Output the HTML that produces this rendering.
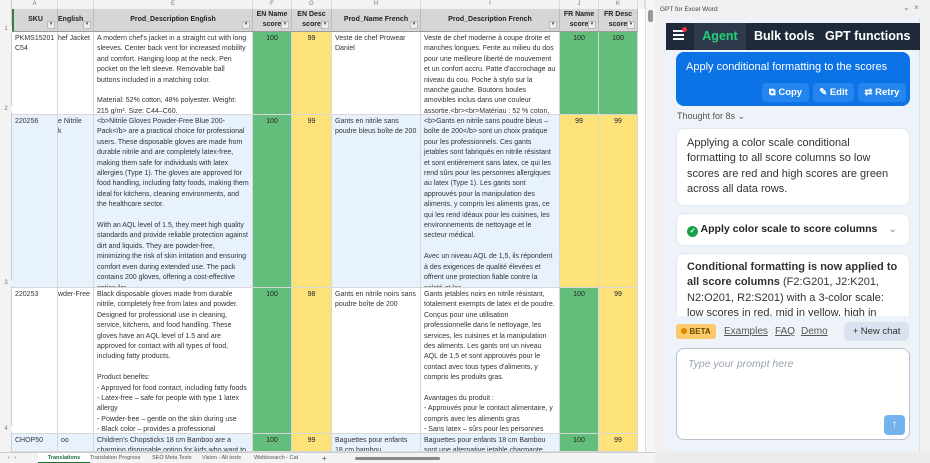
<!DOCTYPE html><html><head><meta charset="utf-8"><style>
*{box-sizing:border-box;margin:0;padding:0}
body{width:930px;height:463px;overflow:hidden;background:#f0f0f0;font-family:"Liberation Sans",sans-serif;position:relative}
.a{position:absolute;overflow:hidden}
.c{position:absolute;overflow:hidden;font-size:7px;line-height:10.4px;color:#333;padding:2px 3px;border-right:1px solid #d8d8d8;border-bottom:1px solid #d8d8d8}
.h{position:absolute;background:#d6d6d6;font-size:7px;font-weight:bold;color:#222;text-align:center;border-right:1px solid #bbb;border-bottom:1px solid #999;display:flex;align-items:center;justify-content:center;line-height:10px}
.h:after{content:"▾";position:absolute;right:2px;bottom:2px;width:6px;height:6px;background:#eee;border:1px solid #bbb;font-size:5px;line-height:5px;color:#555}
.l{position:absolute;top:0;height:9px;font-size:6px;color:#777;text-align:center;background:#f3f3f3;border-right:1px solid #ddd;line-height:9px}
.g{background:#63be7b;text-align:center;color:#222}
.y{background:#fde27a;text-align:center;color:#222}
.bl{background:#e7f2fd}
.w{background:#fff}
.rn{position:absolute;left:0;width:12px;font-size:6px;color:#777;background:#f3f3f3;text-align:center}
</style></head><body>
<div class="a" style="left:0;top:0;width:645px;height:452px;background:#fff">
<div class="l" style="left:12px;width:46px">A</div><div class="l" style="left:58px;width:36px"></div><div class="l" style="left:94px;width:159px">E</div><div class="l" style="left:253px;width:39px">F</div><div class="l" style="left:292px;width:40px">G</div><div class="l" style="left:332px;width:89px">H</div><div class="l" style="left:421px;width:139px">I</div><div class="l" style="left:560px;width:39px">J</div><div class="l" style="left:599px;width:39px">K</div><div class="l" style="left:638px;width:7px"></div>
<div class="rn" style="top:0;height:452px;border-right:1px solid #ccc"></div>
<div class="rn" style="top:26px">1</div><div class="rn" style="top:106px">2</div><div class="rn" style="top:280px">3</div><div class="rn" style="top:426px">4</div>
<div class="h" style="left:12px;top:9px;width:46px;height:23px;border-left:2px solid #3a7d44">SKU</div>
<div class="h" style="left:58px;top:9px;width:36px;height:23px;justify-content:flex-start">English</div>
<div class="h" style="left:94px;top:9px;width:159px;height:23px">Prod_Description English</div>
<div class="h" style="left:253px;top:9px;width:39px;height:23px">EN Name<br>score</div>
<div class="h" style="left:292px;top:9px;width:40px;height:23px">EN Desc<br>score</div>
<div class="h" style="left:332px;top:9px;width:89px;height:23px">Prod_Name French</div>
<div class="h" style="left:421px;top:9px;width:139px;height:23px">Prod_Description French</div>
<div class="h" style="left:560px;top:9px;width:39px;height:23px">FR Name<br>score</div>
<div class="h" style="left:599px;top:9px;width:39px;height:23px">FR Desc<br>score</div>
<div class="c w" style="left:12px;top:32px;width:46px;height:83px">PKMS15201 C54</div>
<div class="c w" style="left:58px;top:32px;width:36px;height:83px;white-space:nowrap;padding-left:0">hef Jacket</div>
<div class="c w" style="left:94px;top:32px;width:159px;height:83px">A modern chef's jacket in a straight cut with long sleeves. Center back vent for increased mobility and comfort. Hanging loop at the neck. Pen pocket on the left sleeve. Removable ball buttons included in a matching color.<br><br>Material: 52% cotton, 48% polyester. Weight: 215 g/m². Size: C44–C60.</div>
<div class="c g" style="left:253px;top:32px;width:39px;height:83px">100</div>
<div class="c y" style="left:292px;top:32px;width:40px;height:83px">99</div>
<div class="c w" style="left:332px;top:32px;width:89px;height:83px">Veste de chef Prowear Daniel</div>
<div class="c w" style="left:421px;top:32px;width:139px;height:83px">Veste de chef moderne à coupe droite et manches longues. Fente au milieu du dos pour une meilleure liberté de mouvement et un confort accru. Patte d'accrochage au niveau du cou. Poche à stylo sur la manche gauche. Boutons boules amovibles inclus dans une couleur assortie.&lt;br&gt;&lt;br&gt;Matériau : 52 % coton,</div>
<div class="c g" style="left:560px;top:32px;width:39px;height:83px">100</div>
<div class="c g" style="left:599px;top:32px;width:39px;height:83px">100</div>
<div class="c bl" style="left:12px;top:115px;width:46px;height:173px">220256</div>
<div class="c bl" style="left:58px;top:115px;width:36px;height:173px;padding-left:0;white-space:nowrap">e Nitrile<br>k</div>
<div class="c bl" style="left:94px;top:115px;width:159px;height:173px">&lt;b&gt;Nitrile Gloves Powder-Free Blue 200-Pack&lt;/b&gt; are a practical choice for professional users. These disposable gloves are made from durable nitrile and are completely latex-free, making them safe for individuals with latex allergies (Type 1). The gloves are approved for food handling, including fatty foods, making them ideal for kitchens, cleaning environments, and the healthcare sector.<br><br>With an AQL level of 1.5, they meet high quality standards and provide reliable protection against dirt and liquids. They are powder-free, minimizing the risk of skin irritation and ensuring comfort even during extended use. The pack contains 200 gloves, offering a cost-effective option for</div>
<div class="c g" style="left:253px;top:115px;width:39px;height:173px">100</div>
<div class="c y" style="left:292px;top:115px;width:40px;height:173px">99</div>
<div class="c bl" style="left:332px;top:115px;width:89px;height:173px">Gants en nitrile sans poudre bleus boîte de 200</div>
<div class="c bl" style="left:421px;top:115px;width:139px;height:173px">&lt;b&gt;Gants en nitrile sans poudre bleus – boîte de 200&lt;/b&gt; sont un choix pratique pour les professionnels. Ces gants jetables sont fabriqués en nitrile résistant et sont entièrement sans latex, ce qui les rend sûrs pour les personnes allergiques au latex (Type 1). Les gants sont approuvés pour la manipulation des aliments, y compris les aliments gras, ce qui les rend idéaux pour les cuisines, les environnements de nettoyage et le secteur médical.<br><br>Avec un niveau AQL de 1,5, ils répondent à des exigences de qualité élevées et offrent une protection fiable contre la saleté et les</div>
<div class="c y" style="left:560px;top:115px;width:39px;height:173px">99</div>
<div class="c y" style="left:599px;top:115px;width:39px;height:173px">99</div>
<div class="c w" style="left:12px;top:288px;width:46px;height:146px">220253</div>
<div class="c w" style="left:58px;top:288px;width:36px;height:146px;padding-left:0;white-space:nowrap">wder-Free</div>
<div class="c w" style="left:94px;top:288px;width:159px;height:146px">Black disposable gloves made from durable nitrile, completely free from latex and powder. Designed for professional use in cleaning, service, kitchens, and food handling. These gloves have an AQL level of 1.5 and are approved for contact with all types of food, including fatty products.<br><br>Product benefits:<br>- Approved for food contact, including fatty foods<br>- Latex-free – safe for people with type 1 latex allergy<br>- Powder-free – gentle on the skin during use<br>- Black color – provides a professional</div>
<div class="c g" style="left:253px;top:288px;width:39px;height:146px">100</div>
<div class="c y" style="left:292px;top:288px;width:40px;height:146px">98</div>
<div class="c w" style="left:332px;top:288px;width:89px;height:146px">Gants en nitrile noirs sans poudre boîte de 200</div>
<div class="c w" style="left:421px;top:288px;width:139px;height:146px">Gants jetables noirs en nitrile résistant, totalement exempts de latex et de poudre. Conçus pour une utilisation professionnelle dans le nettoyage, les services, les cuisines et la manipulation des aliments. Les gants ont un niveau AQL de 1,5 et sont approuvés pour le contact avec tous types d'aliments, y compris les produits gras.<br><br>Avantages du produit :<br>- Approuvés pour le contact alimentaire, y compris avec les aliments gras<br>- Sans latex – sûrs pour les personnes</div>
<div class="c g" style="left:560px;top:288px;width:39px;height:146px">100</div>
<div class="c y" style="left:599px;top:288px;width:39px;height:146px">99</div>
<div class="c bl" style="left:12px;top:434px;width:46px;height:18px">CHOP50</div>
<div class="c bl" style="left:58px;top:434px;width:36px;height:18px">oo</div>
<div class="c bl" style="left:94px;top:434px;width:159px;height:18px">Children's Chopsticks 18 cm Bamboo are a charming disposable option for kids who want to</div>
<div class="c g" style="left:253px;top:434px;width:39px;height:18px">100</div>
<div class="c y" style="left:292px;top:434px;width:40px;height:18px">99</div>
<div class="c bl" style="left:332px;top:434px;width:89px;height:18px">Baguettes pour enfants 18 cm bambou</div>
<div class="c bl" style="left:421px;top:434px;width:139px;height:18px">Baguettes pour enfants 18 cm Bambou sont une alternative jetable charmante</div>
<div class="c g" style="left:560px;top:434px;width:39px;height:18px">100</div>
<div class="c y" style="left:599px;top:434px;width:39px;height:18px">99</div>
</div>
<div class="a" style="left:645px;top:0;width:10px;height:452px;background:#f6f6f6;border-left:1px solid #ddd"><div class="a" style="left:2px;top:10px;width:5px;height:12px;background:#999;border-radius:2px"></div></div>
<div class="a" style="left:0;top:452px;width:655px;height:11px;background:#f3f3f3;font-size:5.5px;color:#555;line-height:11px;border-top:1px solid #ccc">
<span class="a" style="left:8px">‹ &nbsp; ›</span>
<span class="a" style="left:38px;width:52px;text-align:center;background:#fff;color:#1a6e3a;font-weight:bold;border-bottom:1px solid #1a6e3a;height:10px">Translations</span>
<span class="a" style="left:90px">Translation Progress</span><span class="a" style="left:152px">SEO Meta Texts</span><span class="a" style="left:202px">Vision - Alt texts</span><span class="a" style="left:254px">Webbsearch - Cat</span><span class="a" style="left:322px;font-size:8px">+</span>
<div class="a" style="left:355px;top:4px;width:85px;height:3px;background:#888;border-radius:2px"></div>
</div>
<div class="a" style="left:660px;top:6px;font-size:6.5px;color:#444">GPT for Excel Word</div>
<div class="a" style="left:903px;top:3px;font-size:8px;color:#777">⌄ &nbsp;×</div>
<div class="a" style="left:666px;top:18px;width:254px;height:434px;background:#eef3f9;border-right:1px solid #dde"></div>
<div class="a" style="left:655px;top:452px;width:275px;height:11px;background:#ececec"></div>
<div class="a" style="left:666px;top:23px;width:254px;height:27px;background:#1e2a3a;font-size:12.5px;font-weight:bold;color:#fff;line-height:27px">
<div class="a" style="left:7px;top:7px;width:11px;height:2px;background:#fff;box-shadow:0 4px 0 #fff,0 8px 0 #fff"></div>
<div class="a" style="left:16px;top:4px;width:5px;height:5px;background:#e33;border-radius:50%"></div>
<div class="a" style="left:28px;top:0;width:52px;height:27px;background:#2e3a4b;color:#22d07a;text-align:center">Agent</div>
<span class="a" style="left:88px">Bulk tools</span><span class="a" style="left:159px">GPT functions</span></div>
<div class="a" style="left:676px;top:52px;width:234px;height:54px;background:#0b73e6;border-radius:8px;color:#fff">
<div class="a" style="left:10px;top:9px;font-size:11px">Apply conditional formatting to the scores</div>
<div class="a" style="left:86px;top:31px;width:47px;height:19px;background:#2585ee;border-radius:4px;font-size:9.5px;font-weight:bold;line-height:19px;text-align:center">⧉ Copy</div>
<div class="a" style="left:137px;top:31px;width:41px;height:19px;background:#2585ee;border-radius:4px;font-size:9.5px;font-weight:bold;line-height:19px;text-align:center">✎ Edit</div>
<div class="a" style="left:182px;top:31px;width:48px;height:19px;background:#2585ee;border-radius:4px;font-size:9.5px;font-weight:bold;line-height:19px;text-align:center">⇄ Retry</div></div>
<div class="a" style="left:677px;top:111px;font-size:9px;color:#555">Thought for 8s ⌄</div>
<div class="a" style="left:676px;top:128px;width:234px;height:78px;background:#fff;border-radius:8px;border:1px solid #e2e8f0;font-size:11px;line-height:15.3px;color:#333;padding:7px 10px">Applying a color scale conditional formatting to all score columns so low scores are red and high scores are green across all data rows.</div>
<div class="a" style="left:676px;top:213px;width:234px;height:33px;background:#fff;border-radius:8px;border:1px solid #e2e8f0;font-size:10.5px;font-weight:bold;color:#222;line-height:31px;padding-left:10px"><span style="display:inline-block;width:11px;height:11px;border-radius:50%;background:#17a34a;color:#fff;font-size:7px;line-height:11px;text-align:center;vertical-align:-1px">✓</span> Apply color scale to score columns<span class="a" style="right:12px;top:0;color:#888;font-weight:normal">⌄</span></div>
<div class="a" style="left:676px;top:253px;width:234px;height:70px;background:#fff;border-radius:8px 8px 0 0;border:1px solid #e2e8f0;font-size:11px;line-height:15.3px;color:#333;padding:6px 10px"><b>Conditional formatting is now applied to all score columns</b> (F2:G201, J2:K201, N2:O201, R2:S201) with a 3-color scale: low scores in red, mid in yellow, high in green</div>
<div class="a" style="left:666px;top:316px;width:253px;height:30px;background:#eef3f9"></div>
<div class="a" style="left:676px;top:324px;width:40px;height:15px;background:#fcc96b;border-radius:3px;font-size:8px;font-weight:bold;color:#6b4a00;line-height:15px;text-align:center"><span style="display:inline-block;width:6px;height:6px;border-radius:50%;background:#d98a00"></span> BETA</div>
<div class="a" style="left:724px;top:326px;font-size:10px;color:#555;text-decoration:underline">Examples</div>
<div class="a" style="left:775px;top:326px;font-size:10px;color:#555;text-decoration:underline">FAQ</div>
<div class="a" style="left:801px;top:326px;font-size:10px;color:#555;text-decoration:underline">Demo</div>
<div class="a" style="left:844px;top:322px;width:65px;height:19px;background:#d9e2ee;border-radius:5px;font-size:9.5px;color:#333;line-height:19px;text-align:center">+ New chat</div>
<div class="a" style="left:676px;top:348px;width:234px;height:92px;background:#fff;border:1px solid #b8c2cf;border-radius:8px">
<div class="a" style="left:11px;top:9px;font-size:10.5px;font-style:italic;color:#9aa3ad">Type your prompt here</div>
<div class="a" style="left:207px;top:66px;width:21px;height:20px;background:#74b3ee;border-radius:4px;color:#fff;font-size:10px;text-align:center;line-height:20px">↑</div></div>
</body></html>
